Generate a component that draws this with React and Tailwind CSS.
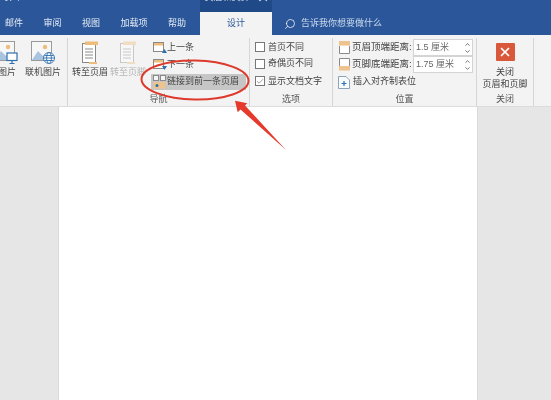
import { Search, X, ChevronUp, ChevronDown, Check } from 'lucide-react';

const tabs = ['邮件', '审阅', '视图', '加载项', '帮助'];

const PictureIcon = ({ online }) => (
  <svg width="24" height="24" viewBox="0 0 24 24">
    <rect x="0.5" y="0.5" width="20" height="19" fill="#f7f7f7" stroke="#9a9a9a" />
    <circle cx="14" cy="6" r="2.2" fill="#eebd7c" />
    <path d="M1 19 L7 10 L12 15 L15 12 L20 19 Z" fill="#a9c4de" />
    {online ? (
      <g fill="#fff" stroke="#2f6fae" strokeWidth="0.9">
        <circle cx="18" cy="17" r="5.5" />
        <ellipse cx="18" cy="17" rx="2.4" ry="5.5" />
        <path d="M12.5 17 H23.5 M13.5 14.5 H22.5 M13.5 19.5 H22.5" />
      </g>
    ) : (
      <g>
        <rect x="13" y="12" width="10" height="7.5" fill="#fff" stroke="#2f6fae" strokeWidth="1.2" />
        <path d="M18 19.5 V22 M15.5 22.5 H20.5" stroke="#2f6fae" strokeWidth="1.2" />
      </g>
    )}
  </svg>
);

const PageIcon = ({ faded }) => (
  <svg width="18" height="24" viewBox="0 0 18 24" className={faded ? 'opacity-40' : ''}>
    <rect x="1.5" y="2.5" width="13" height="19" fill="#fff" stroke="#8a8a8a" />
    <path d="M4 8 H12 M4 11 H12 M4 14 H12 M4 17 H12" stroke="#8a8a8a" />
    <rect x="4" y="0.5" width="13" height="3.5" fill="#eebd7c" />
    <rect x="8" y="21" width="8" height="2" fill="#eebd7c" />
  </svg>
);

const StepIcon = ({ down }) => (
  <svg width="14" height="13" viewBox="0 0 14 13">
    <rect x="0.5" y="1.5" width="10" height="9" fill="#fff" stroke="#8a8a8a" />
    <rect x="1" y="2" width="9" height="2.5" fill="#eebd7c" />
    <path d={down ? 'M9 8 H14 L11.5 12 Z' : 'M9 12 H14 L11.5 8 Z'} fill="#2f6fae" />
  </svg>
);

const LinkIcon = () => (
  <svg width="13" height="14" viewBox="0 0 13 14">
    <rect x="0.5" y="0.5" width="5" height="5" fill="#f4f4f4" stroke="#8a8a8a" />
    <rect x="7.5" y="0.5" width="5" height="5" fill="#f4f4f4" stroke="#8a8a8a" />
    <rect x="0.5" y="7" width="12" height="6.5" fill="#eec48e" />
    <circle cx="4" cy="10.5" r="1.5" fill="#2f6fae" />
  </svg>
);

const MarginIcon = ({ bottom }) => (
  <svg width="11" height="13" viewBox="0 0 11 13">
    <path d={bottom ? 'M0.5 8 V0.5 H10.5 V8' : 'M0.5 5 V12.5 H10.5 V5'} fill="#fff" stroke="#8a8a8a" />
    <rect x="0" y={bottom ? 8 : 0} width="11" height="4.5" fill="#eec48e" />
  </svg>
);

const AlignIcon = () => (
  <svg width="12" height="13" viewBox="0 0 12 13">
    <path d="M0.5 0.5 H8 L11.5 4 V12.5 H0.5 Z" fill="#f8fbfe" stroke="#8fa3b7" />
    <path d="M6 5 V10 M3.5 7.5 H8.5" stroke="#2f6fae" strokeWidth="1.2" />
  </svg>
);

const LargeButton = ({ icon, label, width, faded }) => (
  <div className={`flex flex-col items-center shrink-0 pt-[3px] ${width}`}>
    <div className="h-[24px] flex items-center">{icon}</div>
    <span className={`mt-[1px] whitespace-nowrap leading-[13px] ${faded ? 'text-[#b5b5b5]' : 'text-[#444]'}`}>{label}</span>
  </div>
);

const Group = ({ label, width, children }) => (
  <div className={`flex flex-col shrink-0 h-full border-r border-[#d6d6d6] ${width}`}>
    <div className="flex-1 min-h-0 flex">{children}</div>
    <div className="h-[16px] leading-[18px] text-center text-[#555]">{label}</div>
  </div>
);

const OptionRow = ({ label, checked, height }) => (
  <div className={`flex items-center gap-[3px] ${height}`}>
    <span className="w-[10px] h-[10px] bg-white border border-[#777] flex items-center justify-center">
      {checked && <Check size={9} strokeWidth={1.5} className="text-[#444]" />}
    </span>
    <span>{label}</span>
  </div>
);

const SpinRow = ({ icon, label, value }) => (
  <div className="h-[17.5px] flex items-center">
    <span className="w-[14px] flex justify-center">{icon}</span>
    <span className="w-[62px] pl-[1px] whitespace-nowrap text-[9.5px]">{label}</span>
    <div className="w-[60px] h-[17px] bg-white border border-[#d4d4d4] flex items-center justify-between pl-[2px] pr-[1px]">
      <span className="text-[#666] whitespace-nowrap">{value}</span>
      <span className="flex flex-col text-[#444]">
        <ChevronUp size={7} strokeWidth={2.5} />
        <ChevronDown size={7} strokeWidth={2.5} />
      </span>
    </div>
  </div>
);

export default function App() {
  return (
    <div className="relative w-[551px] h-[400px] overflow-hidden flex flex-col bg-[#e6e6e6] text-[9px] font-['Liberation_Sans','Noto_Sans_CJK_SC',sans-serif] blur-[0.35px]">
      {/* Title bar and tabs */}
      <div className="h-[35px] shrink-0 bg-[#2b579a] flex flex-col text-white">
        <div className="h-[12px] flex">
          <div className="w-[200px] overflow-hidden">
            <span className="block -mt-[12px] -ml-[4px] text-[12px] leading-[16px] text-[#dfe8f3] whitespace-nowrap">文档1 - Word</span>
          </div>
          <div className="w-[72px] bg-[#1f4a87] overflow-hidden">
            <span className="block -mt-[9px] text-center text-[9px] leading-[13px] text-[#dfe8f3] whitespace-nowrap">页眉和页脚工具</span>
          </div>
        </div>
        <div className="h-[23px] flex items-center">
          <div className="w-[200px] flex pl-[5px] gap-[20.5px] text-[#e4ebf4]">
            {tabs.map((tab) => (
              <div key={tab}>{tab}</div>
            ))}
          </div>
          <div className="w-[72px] h-full bg-[#f3f3f3] text-[#2b579a] flex items-center justify-center">设计</div>
          <div className="flex items-center ml-[12px] gap-[5px] text-[#c9d9ec]">
            <Search size={12} strokeWidth={1.5} className="-scale-x-100 text-white" />
            <span>告诉我你想要做什么</span>
          </div>
        </div>
      </div>

      {/* Ribbon */}
      <div className="h-[72px] shrink-0 bg-[#f3f3f3] flex border-b border-[#dcdcdc] pt-[3px] text-[#444]">
        <Group label="" width="w-[68px]">
          <div className="w-[26px] shrink-0 overflow-hidden flex flex-col items-end pr-[8px] pt-[3px]">
            <div className="h-[24px]"><PictureIcon /></div>
            <span className="mt-[1px] mr-[2px] leading-[13px] whitespace-nowrap">图片</span>
          </div>
          <LargeButton width="w-[34px]" icon={<PictureIcon online />} label="联机图片" />
        </Group>
        <Group label="导航" width="w-[182px]">
          <div className="w-[3px]" />
          <LargeButton width="w-[38px]" icon={<PageIcon />} label="转至页眉" />
          <LargeButton width="w-[38px]" icon={<PageIcon faded />} label="转至页脚" faded />
          <div className="flex flex-col ml-[4px] pt-[2px]">
            <div className="h-[16px] flex items-center pl-[2px]"><StepIcon />上一条</div>
            <div className="h-[19px] flex items-center pl-[2px]"><StepIcon down />下一条</div>
            <div className="h-[17px] w-[95px] bg-[#c6c6c6] flex items-center gap-[1px] pl-[2px] whitespace-nowrap"><LinkIcon />链接到前一条页眉</div>
          </div>
        </Group>
        <Group label="选项" width="w-[83px]">
          <div className="flex flex-col pl-[5px] pt-[1.5px]">
            <OptionRow label="首页不同" height="h-[16px]" />
            <OptionRow label="奇偶页不同" height="h-[18px]" />
            <OptionRow label="显示文档文字" height="h-[18px]" checked />
          </div>
        </Group>
        <Group label="位置" width="w-[144px]">
          <div className="flex flex-col pl-[4px] pt-[1px]">
            <SpinRow icon={<MarginIcon />} label="页眉顶端距离:" value="1.5 厘米" />
            <SpinRow icon={<MarginIcon bottom />} label="页脚底端距离:" value="1.75 厘米" />
            <div className="h-[18px] mt-[1px] flex items-center gap-[3px] pl-[1px]"><AlignIcon />插入对齐制表位</div>
          </div>
        </Group>
        <Group label="关闭" width="w-[57px]">
          <div className="w-full flex flex-col items-center pt-[5px]">
            <div className="w-[19px] h-[19px] bg-[#d9583b] rounded-[1px] flex items-center justify-center">
              <X size={14} strokeWidth={3} className="text-white" />
            </div>
            <span className="mt-[5px] leading-[12px]">关闭</span>
            <span className="leading-[12px] whitespace-nowrap">页眉和页脚</span>
          </div>
        </Group>
      </div>

      {/* Document area */}
      <div className="flex-1 min-h-0 pl-[58px]">
        <div className="w-[420px] h-full bg-white border-x border-[#d9d9d9]" />
      </div>

      {/* Red annotation */}
      <svg width="551" height="400" viewBox="0 0 551 400" className="absolute left-0 top-0 pointer-events-none">
        <ellipse cx="195" cy="80" rx="53.5" ry="19.5" fill="none" stroke="#dd3a2c" strokeWidth="2" transform="rotate(1 195 80)" />
        <polygon points="235,100.7 237.7,112.3 240.5,109.5 286,150 245,105.5 247.3,103.3" fill="#e5392c" />
      </svg>
    </div>
  );
}
